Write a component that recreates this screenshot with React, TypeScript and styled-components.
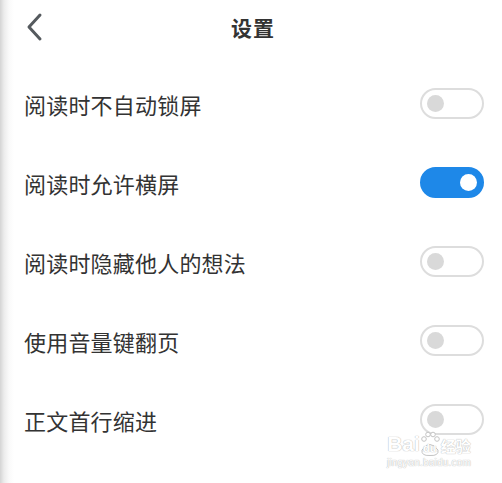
import React from 'react';
import styled, { createGlobalStyle } from 'styled-components';

const GlobalStyle = createGlobalStyle`
  html, body {
    margin: 0;
    padding: 0;
    background: #ffffff;
  }
  body {
    font-family: "Noto Sans CJK SC", "Noto Sans", sans-serif;
  }
`;

const StyledPage = styled.main`
  position: relative;
  width: 502px;
  height: 483px;
  overflow: hidden;
  background: linear-gradient(to right, #d4d4d4 0px, #ececec 4px, #fafafa 9px, #ffffff 14px);
`;

const StyledHeader = styled.header`
  height: 54px;
  display: flex;
  align-items: center;
  justify-content: center;
  position: relative;
`;

const BackButton = styled.button`
  position: absolute;
  left: 20px;
  top: 10px;
  width: 30px;
  height: 34px;
  border: none;
  background: transparent;
  padding: 0;
  display: flex;
  align-items: center;
  justify-content: center;
`;

const Title = styled.h1`
  margin: 0;
  font-size: 21px;
  font-weight: 700;
  color: #333333;
  letter-spacing: 1px;
  padding-left: 4px;
`;

const StyledUl = styled.ul`
  list-style: none;
  margin: 0;
  padding: 10px 0 0 0;
  display: flex;
  flex-direction: column;
`;

const Row = styled.li`
  height: 79px;
  display: flex;
  align-items: center;
  justify-content: space-between;
  padding: 0 18px 0 24px;
`;

const Label = styled.span`
  font-size: 22px;
  color: #333333;
  letter-spacing: 0.2px;
`;

const Switch = styled.span<{ $on?: boolean }>`
  box-sizing: border-box;
  width: 64px;
  height: 31px;
  border-radius: 16px;
  border: 2px solid ${(props) => (props.$on ? '#1e88e8' : '#dddddd')};
  background-color: ${(props) => (props.$on ? '#1e88e8' : '#ffffff')};
  display: flex;
  align-items: center;
  justify-content: ${(props) => (props.$on ? 'flex-end' : 'flex-start')};
  padding: 0 5px;
`;

const Knob = styled.span<{ $on?: boolean }>`
  width: 17px;
  height: 17px;
  border-radius: 50%;
  background-color: ${(props) => (props.$on ? '#ffffff' : '#d9d9d9')};
`;

const Watermark = styled.div`
  position: absolute;
  left: 384px;
  top: 431px;
  width: 90px;
  display: flex;
  flex-direction: column;
  align-items: center;
  color: #ffffff;
  font-family: "Liberation Sans", sans-serif;
  text-shadow: 0 0 1px #bdbdbd, 0 0 1px #bdbdbd;
  pointer-events: none;
`;

const WatermarkBrand = styled.div`
  display: flex;
  align-items: flex-end;
  font-size: 21px;
  font-weight: 700;
  line-height: 26px;
`;

const Paw = styled.span`
  position: relative;
  width: 20px;
  height: 26px;
  display: flex;
  align-items: flex-end;
  justify-content: center;
`;

const PawText = styled.span`
  position: relative;
  font-size: 11px;
  line-height: 14px;
  margin-bottom: 2px;
`;

const WatermarkCjk = styled.span`
  font-family: "Noto Sans CJK SC", sans-serif;
  font-size: 15px;
  line-height: 22px;
  margin-left: 1px;
`;

const WatermarkUrl = styled.span`
  font-size: 10px;
  line-height: 12px;
  letter-spacing: 0.2px;
`;

const settings = [
  { text: '阅读时不自动锁屏', on: false },
  { text: '阅读时允许横屏', on: true },
  { text: '阅读时隐藏他人的想法', on: false },
  { text: '使用音量键翻页', on: false },
  { text: '正文首行缩进', on: false },
];

const App: React.FC = () => {
  return (
    <>
      <GlobalStyle />
      <StyledPage>
        <StyledHeader>
          <BackButton aria-label="返回">
            <svg width="20" height="30" viewBox="0 0 20 30">
              <path
                d="M15 3 L4 15 L15 27"
                fill="none"
                stroke="#555a5e"
                strokeWidth="3"
                strokeLinecap="round"
                strokeLinejoin="round"
              />
            </svg>
          </BackButton>
          <Title>设置</Title>
        </StyledHeader>
        <StyledUl>
          {settings.map((item) => (
            <Row key={item.text}>
              <Label>{item.text}</Label>
              <Switch $on={item.on}>
                <Knob $on={item.on} />
              </Switch>
            </Row>
          ))}
        </StyledUl>
        <Watermark>
          <WatermarkBrand>
            Bai
            <Paw>
              <svg width="20" height="26" viewBox="0 0 20 26" style={{ position: 'absolute', left: 0, top: 0 }}>
                <circle cx="4" cy="8" r="2.3" fill="#fff" stroke="#c4c4c4" />
                <circle cx="8" cy="3.5" r="2.3" fill="#fff" stroke="#c4c4c4" />
                <circle cx="13" cy="3.5" r="2.3" fill="#fff" stroke="#c4c4c4" />
                <circle cx="17" cy="8" r="2.3" fill="#fff" stroke="#c4c4c4" />
                <path d="M2 19 Q10 8 18 19 Q19 25 10 24.5 Q1 25 2 19 Z" fill="#fff" stroke="#c4c4c4" />
              </svg>
              <PawText>du</PawText>
            </Paw>
            <WatermarkCjk>经验</WatermarkCjk>
          </WatermarkBrand>
          <WatermarkUrl>jingyan.baidu.com</WatermarkUrl>
        </Watermark>
      </StyledPage>
    </>
  );
};

export default App;
